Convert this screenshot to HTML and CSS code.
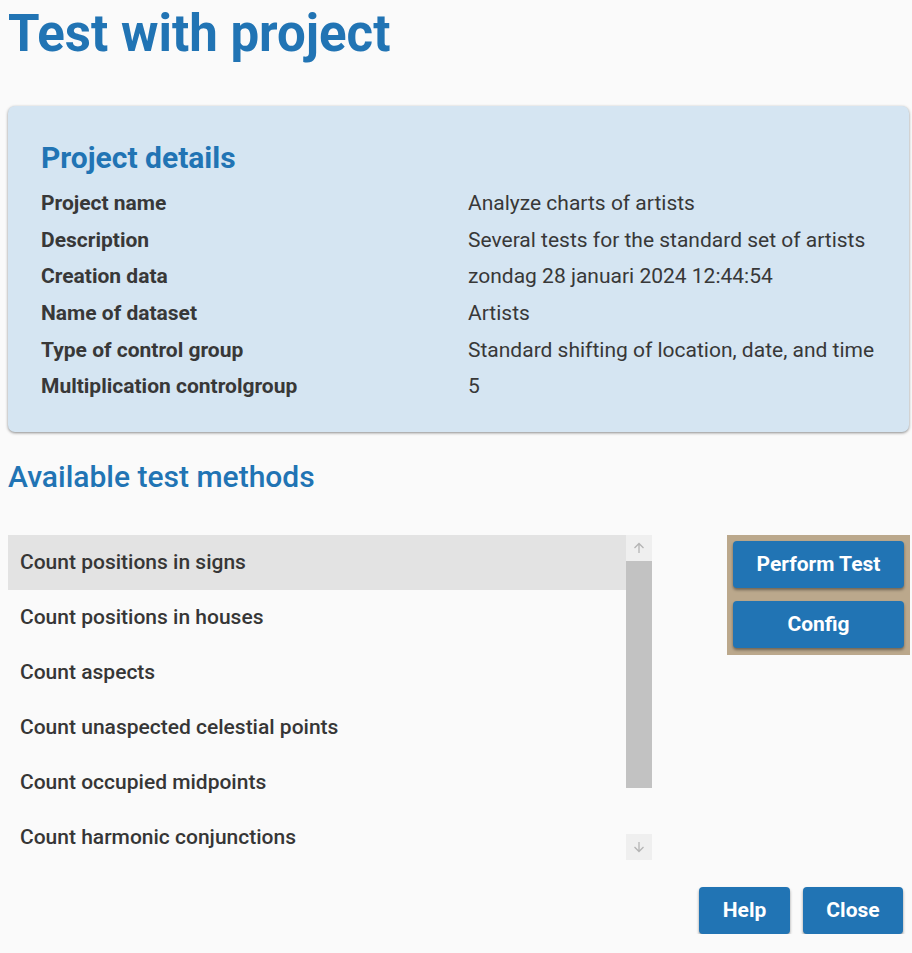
FILE: index.html
```html
<!DOCTYPE html>
<html lang="en">
<head>
<meta charset="utf-8">
<title>Test with project</title>
<link rel="stylesheet" href="styles.css">
</head>
<body>
<div class="page">
  <h1 class="title">Test with project</h1>

  <section class="card">
    <h2 class="card-title">Project details</h2>
    <div class="details">
      <div class="label">Project name</div><div class="value">Analyze charts of artists</div>
      <div class="label">Description</div><div class="value">Several tests for the standard set of artists</div>
      <div class="label">Creation data</div><div class="value">zondag 28 januari 2024 12:44:54</div>
      <div class="label">Name of dataset</div><div class="value">Artists</div>
      <div class="label">Type of control group</div><div class="value">Standard shifting of location, date, and time</div>
      <div class="label">Multiplication controlgroup</div><div class="value">5</div>
    </div>
  </section>

  <h2 class="section-title">Available test methods</h2>

  <div class="methods">
    <div class="listbox">
      <ul class="list">
        <li class="item selected">Count positions in signs</li>
        <li class="item">Count positions in houses</li>
        <li class="item">Count aspects</li>
        <li class="item">Count unaspected celestial points</li>
        <li class="item">Count occupied midpoints</li>
        <li class="item">Count harmonic conjunctions</li>
      </ul>
      <div class="scrollbar">
        <div class="sb-btn">
          <svg width="12" height="12" viewBox="0 0 12 12"><path d="M6 11V1.5M1.5 6L6 1.5 10.5 6" fill="none" stroke="#b4b4b4" stroke-width="1.3"/></svg>
        </div>
        <div class="sb-track"><div class="sb-thumb"></div></div>
        <div class="sb-btn">
          <svg width="12" height="12" viewBox="0 0 12 12"><path d="M6 1v9.5M1.5 6L6 10.5 10.5 6" fill="none" stroke="#b4b4b4" stroke-width="1.3"/></svg>
        </div>
      </div>
    </div>
    <div class="actions">
      <button class="btn btn-wide">Perform Test</button>
      <button class="btn btn-wide">Config</button>
    </div>
  </div>

  <div class="footer">
    <button class="btn btn-help">Help</button>
    <button class="btn btn-close">Close</button>
  </div>
</div>
</body>
</html>
```

FILE: styles.css
```css
* { box-sizing: border-box; }

html, body {
  margin: 0;
  padding: 0;
  background: #fafafa;
}

body {
  font-family: Roboto, "Liberation Sans", Arial, sans-serif;
  color: #363636;
}

.page {
  width: 912px;
  padding: 0 2px 0 8px;
}

.title {
  margin: 4px 0 0 0;
  font-size: 51px;
  font-weight: 700;
  line-height: normal;
  color: #2174b4;
}

.card {
  margin: 43px 1px 0 0;
  background: #d5e5f2;
  border-radius: 7px;
  box-shadow: 0 1px 3px rgba(0, 0, 0, 0.45);
  padding: 34px 33px 27px 33px;
}

.card-title {
  margin: 0 0 10px 0;
  font-size: 30px;
  font-weight: 700;
  line-height: normal;
  color: #2174b4;
}

.details {
  display: grid;
  grid-template-columns: 427px 1fr;
  grid-auto-rows: 36.6px;
  align-items: center;
  font-size: 21px;
}

.label {
  font-weight: 700;
  color: #383838;
}

.value {
  font-weight: 400;
  color: #383838;
}

.section-title {
  margin: 27px 0 0 0;
  font-size: 30px;
  font-weight: 500;
  line-height: normal;
  color: #2174b4;
}

.methods {
  margin-top: 41px;
  display: flex;
  align-items: flex-start;
  gap: 75px;
}

.listbox {
  display: flex;
  width: 644px;
  height: 325px;
}

.list {
  list-style: none;
  margin: 0;
  padding: 0;
  width: 618px;
  height: 325px;
  overflow: hidden;
}

.item {
  height: 55px;
  display: flex;
  align-items: center;
  padding-left: 12px;
  font-size: 21px;
  font-weight: 500;
  color: #363636;
}

.item.selected {
  background: #e3e3e3;
}

.scrollbar {
  width: 26px;
  display: flex;
  flex-direction: column;
}

.sb-btn {
  height: 26px;
  background: #efefef;
  display: flex;
  align-items: center;
  justify-content: center;
}

.sb-track {
  flex: 1;
  display: flex;
  flex-direction: column;
}

.sb-thumb {
  height: 227px;
  background: #c2c2c2;
}

.actions {
  background: #bba88c;
  padding: 6px 6px 7px 6px;
  display: flex;
  flex-direction: column;
  gap: 13px;
  width: 183px;
}

.btn {
  font-family: Roboto, "Liberation Sans", Arial, sans-serif;
  font-size: 21px;
  font-weight: 700;
  color: #ffffff;
  background: #2174b4;
  border: none;
  border-radius: 4px;
  box-shadow: 0 2px 3px rgba(0, 0, 0, 0.4);
  height: 47px;
  padding: 0;
  cursor: pointer;
}

.btn-wide {
  width: 171px;
}

.footer {
  margin-top: 27px;
  display: flex;
  justify-content: flex-end;
  gap: 13px;
  padding-right: 7px;
}

.btn-help {
  width: 91px;
}

.btn-close {
  width: 100px;
}
```
